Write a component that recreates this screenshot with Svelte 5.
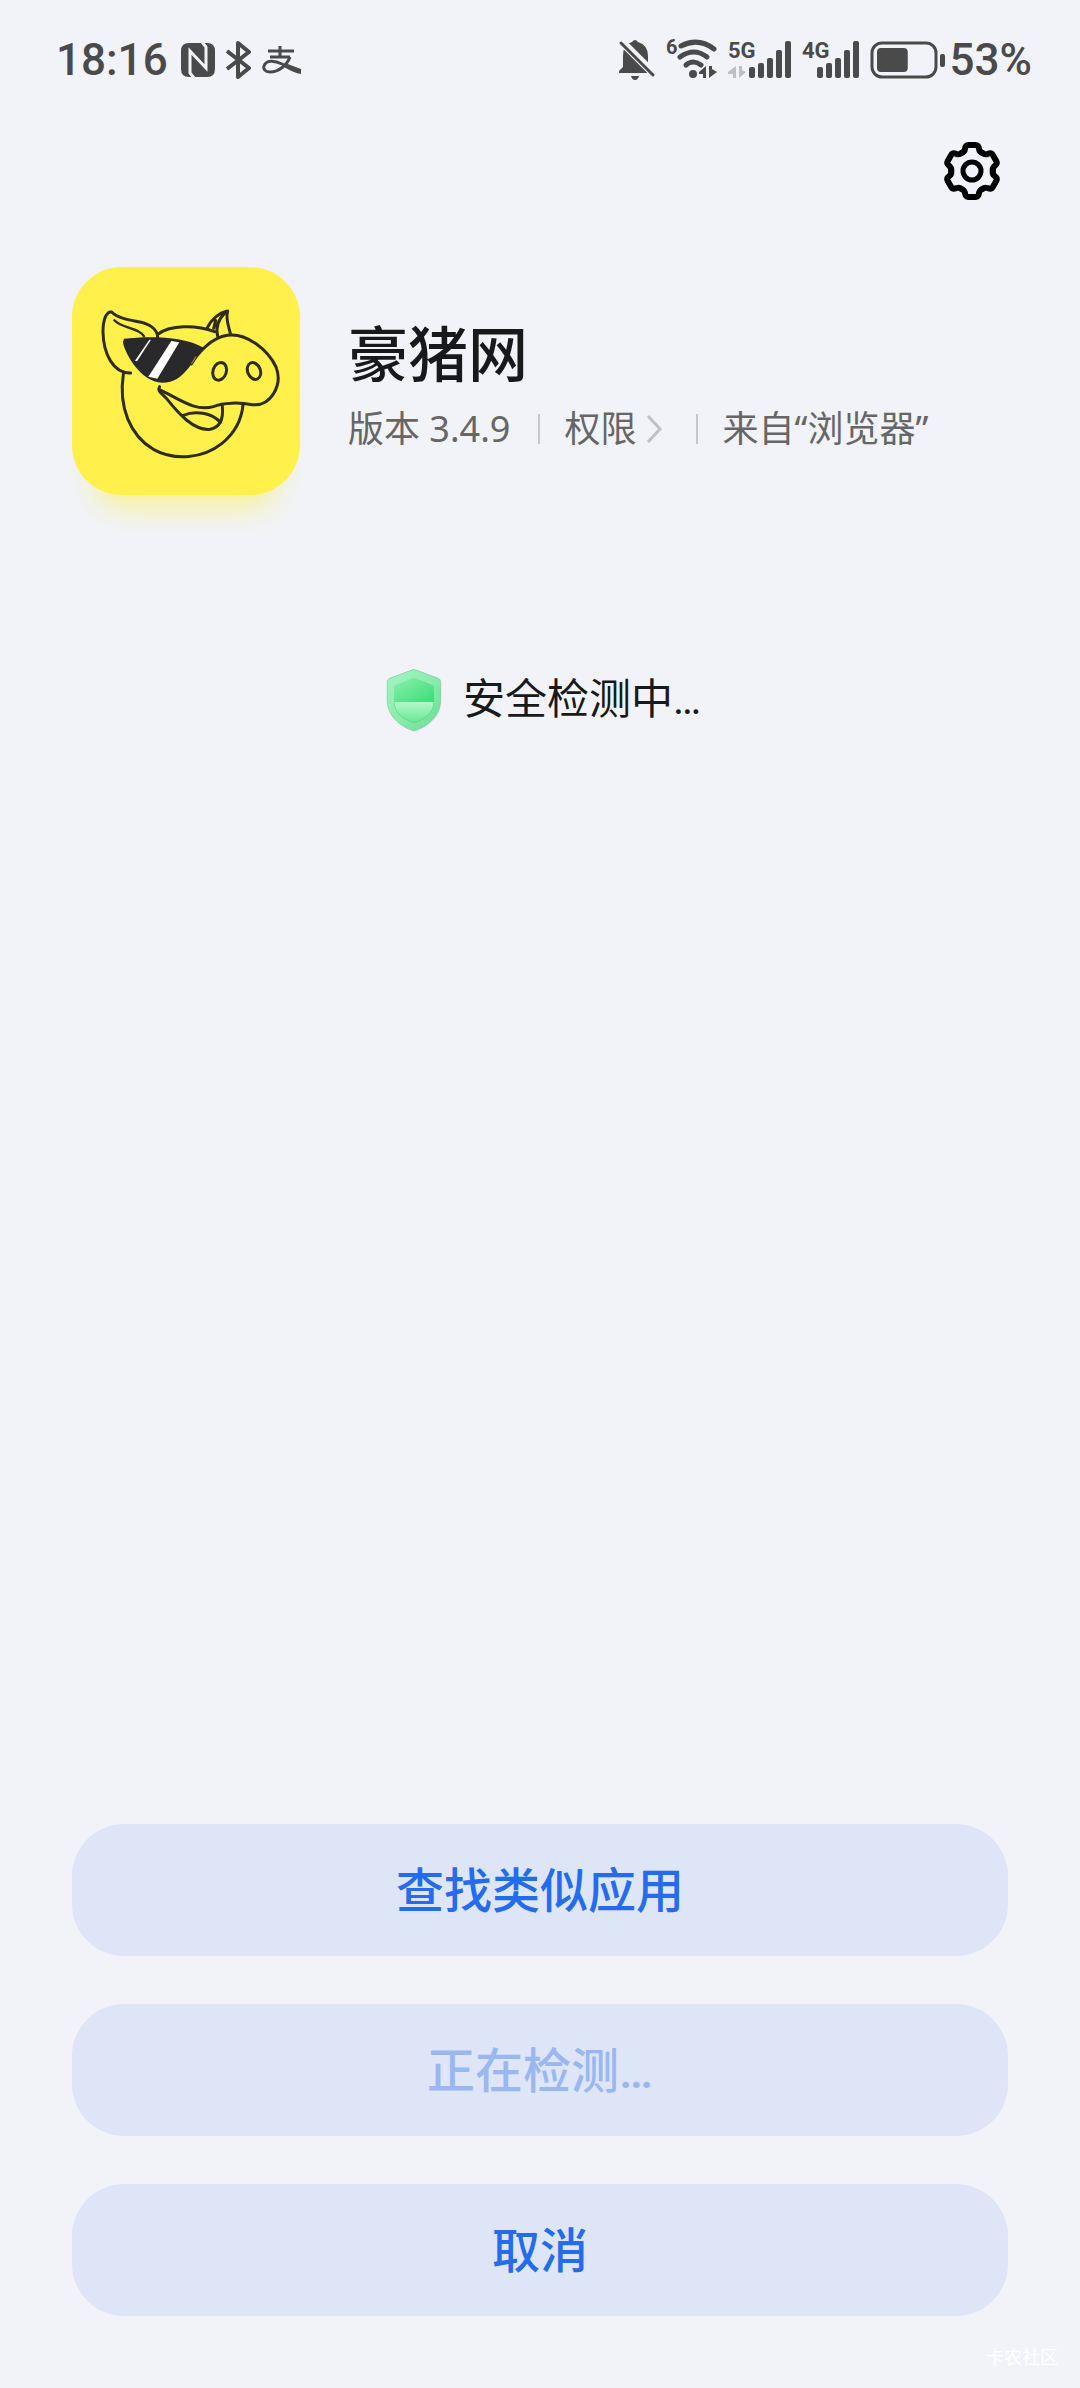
<script>
	export let time = "18:16";
	export let battery = 53;
	export let appName = "豪猪网";
	export let version = "3.4.9";
	export let source = "浏览器";

	const networks = [
		{ name: "5G", start: 21, width: 64, idle: true },
		{ name: "4G", start: 15, width: 58, idle: false },
	];
	const barHeights = [11, 15, 20, 28, 37];
	const teeth = [0, 60, 120, 180, 240, 300];

	const actions = [
		{ label: "查找类似应用", disabled: false },
		{ label: "正在检测…", disabled: true },
		{ label: "取消", disabled: false },
	];
</script>

<style>
	:global(body) {
		background: #f1f3f8;
	}

	.screen {
		display: flex;
		flex-direction: column;
		min-height: 100vh;
		color: #18191b;
		font-family: Roboto, "Noto Sans CJK SC", sans-serif;
	}

	svg {
		display: block;
		flex: none;
	}

	.statusbar {
		display: flex;
		align-items: center;
		justify-content: space-between;
		height: 120px;
		padding: 0 48px 0 56px;
		color: #4a4a4b;
		font-size: 44px;
		font-weight: 500;
	}

	.status-group {
		display: flex;
		align-items: center;
		gap: 10px;
	}

	.time {
		margin-right: 2px;
	}

	.battery {
		display: flex;
		align-items: center;
		gap: 4px;
	}

	.badge {
		font-size: 22px;
		font-weight: 700;
	}

	.badge.small {
		font-size: 20px;
	}

	.toolbar {
		display: flex;
		justify-content: flex-end;
		padding: 15px 72px;
	}

	.settings {
		padding: 6px;
		border: 0;
		background: none;
		color: #000;
	}

	.app {
		display: flex;
		align-items: center;
		gap: 48px;
		padding: 45px 72px 0;
	}

	.logo {
		flex: none;
		border-radius: 50px;
		background: #fff04b;
		box-shadow: 0 36px 30px -24px rgba(255, 240, 75, 0.6);
	}

	.info {
		padding-top: 12px;
	}

	h1 {
		margin: 0;
		font-size: 60px;
		font-weight: 500;
		line-height: 84px;
	}

	.meta {
		display: flex;
		align-items: center;
		color: #666;
		font-family: "Noto Sans", "Noto Sans CJK SC", sans-serif;
		font-size: 36px;
		line-height: 60px;
	}

	.rule {
		width: 2px;
		height: 30px;
		margin: 0 24px 0 28px;
		background: #c6c8cd;
	}

	.permissions {
		display: flex;
		align-items: center;
		gap: 8px;
		color: inherit;
		text-decoration: none;
	}

	.check {
		display: flex;
		align-items: center;
		justify-content: center;
		gap: 14px;
		margin: 172px 0 0;
		font-size: 42px;
		line-height: 66px;
	}

	.actions {
		display: flex;
		flex-direction: column;
		gap: 48px;
		margin-top: auto;
		padding: 0 72px;
	}

	.action {
		height: 132px;
		padding: 0 0 6px;
		border: 0;
		border-radius: 52px;
		background: #dde5f6;
		color: #256bee;
		font-family: inherit;
		font-size: 48px;
		font-weight: 500;
	}

	.action:disabled {
		color: #9ab7f2;
	}

	.mark {
		height: 72px;
		padding-right: 22px;
		color: #fff;
		font-size: 18px;
		line-height: 84px;
		text-align: right;
		box-sizing: border-box;
	}
</style>

<div class="screen">
	<div class="statusbar">
		<div class="status-group">
			<span class="time">{time}</span>
			<!-- nfc -->
			<svg width="36" height="36" viewBox="0 0 36 36">
				<path d="M9 1H27Q35 1 35 9V27Q35 35 27 35H9Q1 35 1 27V9Q1 1 9 1Z" fill="currentColor" />
				<path d="M14 36L10 31V9L26 26V5L22 0" fill="none" stroke="#f1f3f8" stroke-width="3" />
			</svg>
			<!-- bluetooth -->
			<svg width="26" height="40" viewBox="0 0 26 40">
				<path d="M1 11L23 28L12 37V3L23 12L1 29" fill="none" stroke="currentColor" stroke-width="4" stroke-linejoin="round" />
			</svg>
			<!-- alipay -->
			<svg width="40" height="36" viewBox="0 0 40 36">
				<g fill="none" stroke="currentColor" stroke-width="3">
					<path d="M6 9H32M18 4V16M8 15H28" />
					<path d="M28 15C25 23 17 30 8 30C3 30 1 27 2 24C4 18 12 18 20 22C26 25 33 28 39 29" />
				</g>
				<path d="M23 21L39 27V32Q32 31 22 25Z" fill="currentColor" />
			</svg>
		</div>
		<div class="status-group">
			<!-- muted bell -->
			<svg width="38" height="42" viewBox="0 0 38 42">
				<path d="M1 34V32L5 28V17Q5 5 14 3Q17 -1 20 3Q30 6 30 17V28L35 34Z" fill="currentColor" />
				<path d="M13 37H21Q20 41 17 41Q14 41 13 37Z" fill="currentColor" />
				<path d="M1 0L38 37" stroke="#f1f3f8" stroke-width="8" />
				<path d="M3 4L35 36" stroke="currentColor" stroke-width="3" stroke-linecap="round" />
			</svg>
			<!-- wifi -->
			<svg width="52" height="54" viewBox="0 -6 52 54">
				<text x="0" y="15" class="badge small" fill="currentColor">6</text>
				<g fill="none" stroke="currentColor" stroke-width="5" stroke-linecap="round">
					<path d="M15 7Q32 -2 48 10" />
					<path d="M14 18Q28 8 41 18" />
					<path d="M20 26Q27 20 35 26" />
				</g>
				<circle cx="27" cy="35" r="4" fill="currentColor" />
				<path d="M40 27V39H37V35H33V33ZM43 27V39L51 33L46 30V27Z" fill="currentColor" />
			</svg>
			{#each networks as net}
				<svg width={net.width} height="54" viewBox="0 -6 {net.width} 54">
					<text x="0" y="19" class="badge" fill="currentColor">{net.name}</text>
					{#if net.idle}
						<path d="M8 27V39H5V35H0V33ZM11 27V39L18 33L14 31V27Z" fill="#bebfc2" />
					{/if}
					{#each barHeights as h, i}
						<rect x={net.start + i * 9} y={39 - h} width="6" height={h} rx="2" fill="currentColor" />
					{/each}
				</svg>
			{/each}
			<div class="battery">
				<svg width="76" height="38" viewBox="0 0 76 38">
					<rect x="2" y="2" width="64" height="34" rx="10" fill="none" stroke="currentColor" stroke-width="3" />
					<rect x="7" y="7" width={battery * 0.58} height="24" rx="4" fill="currentColor" />
					<rect x="70" y="13" width="5" height="13" rx="2" fill="currentColor" />
				</svg>
				<span>{battery}%</span>
			</div>
		</div>
	</div>

	<div class="toolbar">
		<button class="settings" aria-label="设置">
			<svg width="60" height="60" viewBox="-30 -30 60 60">
				<g fill="none" stroke="currentColor" stroke-width="6" stroke-linecap="round">
					{#each teeth as angle}
						<path d="M-10.4-18Q-7.5-19-7-22Q-6.5-26-3.5-26H3.5Q6.5-26 7-22Q7.5-19 10.4-18" transform="rotate({angle})" />
					{/each}
					<circle r="9" stroke-width="5" />
				</g>
			</svg>
		</button>
	</div>

	<header class="app">
		<svg class="logo" width="228" height="228" viewBox="66 50 684 684">
			<g fill="none" stroke="#302d16" stroke-width="9" stroke-linecap="round" stroke-linejoin="round">
				<path d="M242 368C190 370 160 310 159 245C159 205 170 182 185 185C205 205 240 209 270 215C300 222 323 238 323 262" />
				<path d="M193 210C215 235 268 232 282 258" stroke-width="7" />
				<path d="M220 372C205 470 240 555 310 597C375 633 460 624 515 580C555 548 575 508 579 463" />
				<path d="M326 250C360 225 435 222 494 244" />
				<path d="M472 232C483 208 506 188 533 182C526 204 535 225 541 249M526 186C505 207 496 230 503 257M497 210L491 234" />
				<path d="M424 341C445 305 485 262 532 255C590 246 655 300 678 350C700 405 660 470 607 463C570 456 520 456 490 469C435 485 385 444 328 418" />
				<path d="M329 409C320 423 338 430 350 445C385 489 430 541 480 537C516 530 520 499 517 468" />
				<path d="M400 495C435 480 485 487 511 516" />
				<ellipse cx="509" cy="363" rx="20" ry="27" transform="rotate(18 509 363)" />
				<ellipse cx="612" cy="362" rx="19" ry="26" transform="rotate(-22 612 362)" />
			</g>
			<path d="M222 265C290 258 400 255 462 293C425 328 406 397 337 397C270 397 220 300 219 275Z" fill="#29282b" />
			<path d="M364 272L388 276L322 385L295 379Z" fill="#fff" />
			<path d="M298 268L303 268L261 333L255 331Z" fill="#fff" />
			<path d="M424 341L438 318" stroke="#8b7b2d" stroke-width="4" />
		</svg>
		<div class="info">
			<h1>{appName}</h1>
			<div class="meta">
				<span>版本 {version}</span>
				<span class="rule"></span>
				<a class="permissions" href="#permissions">
					权限
					<svg width="24" height="32" viewBox="0 0 24 32">
						<path d="M4 3L16 16L4 29" fill="none" stroke="#bfc0c4" stroke-width="3" />
					</svg>
				</a>
				<span class="rule"></span>
				<span>来自“{source}”</span>
			</div>
		</div>
	</header>

	<p class="check">
		<svg width="70" height="66" viewBox="30 50 210 198">
			<defs>
				<linearGradient id="shell" x1="0" y1="0" x2="1" y2="1">
					<stop offset="0" stop-color="#a5f3c4" />
					<stop offset="0.5" stop-color="#8cecae" />
					<stop offset="1" stop-color="#68dc91" />
				</linearGradient>
				<linearGradient id="core" x1="0" y1="0" x2="1" y2="1">
					<stop offset="0" stop-color="#8af0ac" />
					<stop offset="1" stop-color="#3cdc78" />
				</linearGradient>
				<linearGradient id="fill" x1="0" y1="0" x2="0" y2="1">
					<stop offset="0" stop-color="#b4f8ca" />
					<stop offset="1" stop-color="#65e793" />
				</linearGradient>
			</defs>
			<path d="M135 57L208 84Q215 87 215 94V150C215 195 180 228 135 242C90 228 55 195 55 150V94Q55 87 62 84Z" fill="url(#shell)" stroke="#73cb91" stroke-width="2" />
			<path d="M135 82L189 103Q195 106 195 111V155H75V111Q75 106 81 103Z" fill="url(#core)" />
			<path d="M75 155H195C194 187 168 207 135 218C102 207 76 187 75 155Z" fill="url(#fill)" />
			<path d="M75 157C77 187 102 207 135 217C168 207 193 187 195 157" fill="none" stroke="#52d783" stroke-width="2" />
		</svg>
		<span>安全检测中…</span>
	</p>

	<div class="actions">
		{#each actions as action}
			<button class="action" disabled={action.disabled}>{action.label}</button>
		{/each}
	</div>
	<div class="mark">卡农社区</div>
</div>
